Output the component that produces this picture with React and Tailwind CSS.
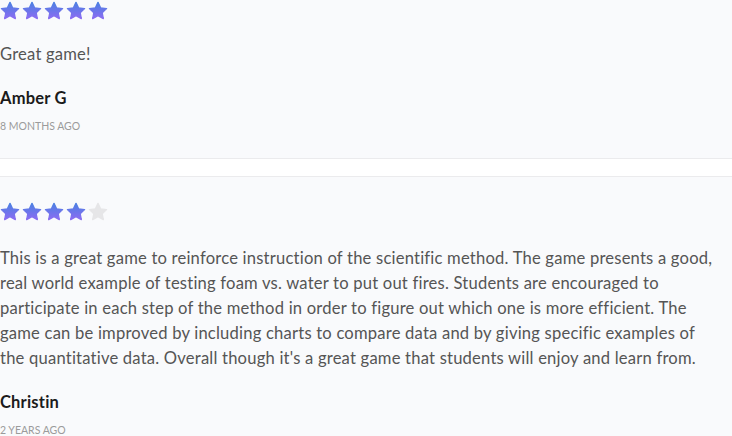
import React from "react";

function Star({ filled, id }) {
  return (
    <svg width="20" height="20" viewBox="0 0 24 24" className="block">
      <defs>
        <linearGradient id={id} x1="0" y1="0" x2="0" y2="1">
          <stop offset="0%" stopColor="#4b80e2" />
          <stop offset="100%" stopColor="#8b6cf2" />
        </linearGradient>
      </defs>
      <path
        d="M12 1.6l3.1 6.6 7.2.9-5.3 4.9 1.4 7.1L12 17.6l-6.4 3.5 1.4-7.1-5.3-4.9 7.2-.9z"
        fill={filled ? `url(#${id})` : "#e6e6e8"}
        stroke={filled ? `url(#${id})` : "#e6e6e8"}
        strokeWidth="1.6"
        strokeLinejoin="round"
      />
    </svg>
  );
}

function Stars({ count, prefix }) {
  return (
    <div className="flex gap-[2px]">
      {[0, 1, 2, 3, 4].map((i) => (
        <Star key={i} filled={i < count} id={`${prefix}-${i}`} />
      ))}
    </div>
  );
}

function Review({ rating, children, name, date, prefix, pClass }) {
  return (
    <div>
      <Stars count={rating} prefix={prefix} />
      <p className={`${pClass} text-[16.6px] leading-[25px] text-[#555555] tracking-[0.2px]`}>{children}</p>
      <div className="mt-[21px] text-[16.5px] leading-[20px] font-bold text-[#1b1b1b] tracking-[0.2px]">{name}</div>
      <div className="mt-[12px] text-[10.5px] leading-[12px] uppercase text-[#9b9b9b]">{date}</div>
    </div>
  );
}

export default function App() {
  return (
    <div
      className="w-[732px] h-[436px] overflow-hidden bg-[#f9fafc]"
      style={{ fontFamily: "Lato, 'Noto Sans', sans-serif" }}
    >
      <div className="pt-[1px] pb-[26px] border-b border-[#ebebed]">
        <Review prefix="a" rating={5} pClass="mt-[21px]" name="Amber G" date="8 months ago">
          Great game!
        </Review>
      </div>
      <div className="h-[17px] bg-white"></div>
      <div className="border-t border-[#ebebed] pt-[25px]">
        <Review prefix="b" rating={4} pClass="mt-[24px] whitespace-nowrap" name="Christin" date="2 years ago">
          This is a great game to reinforce instruction of the scientific method. The game presents a good,
          <br />
          real world example of testing foam vs. water to put out fires. Students are encouraged to
          <br />
          participate in each step of the method in order to figure out which one is more efficient. The
          <br />
          game can be improved by including charts to compare data and by giving specific examples of
          <br />
          the quantitative data. Overall though it's a great game that students will enjoy and learn from.
        </Review>
      </div>
    </div>
  );
}
